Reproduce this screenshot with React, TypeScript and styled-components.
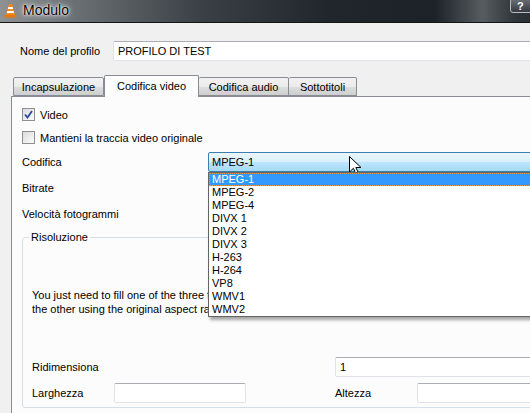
import React from "react";
import styled, { createGlobalStyle } from "styled-components";

const GlobalStyle = createGlobalStyle`
  html, body { margin: 0; padding: 0; background: #f0f0f0; }
  body {
    font-family: "Liberation Sans", Arial, sans-serif;
    font-size: 11px;
    color: #000;
  }
  #root { width: 530px; height: 413px; overflow: hidden; }
`;

const Window = styled.div`
  width: 530px;
  height: 413px;
  overflow: hidden;
  display: flex;
  flex-direction: column;
  background: #f0f0f0;
`;

const TitleBar = styled.div`
  height: 22px;
  flex: none;
  display: flex;
  align-items: flex-start;
  padding-left: 4px;
  background: linear-gradient(
    90deg,
    #8e9295 0%,
    #6b7074 14%,
    #3a4045 38%,
    #20262b 62%,
    #1c2227 82%,
    #565c60 91%,
    #30363a 97%,
    #2a3034 100%
  );
  border-bottom: 1px solid #151515;
`;

const Cone = styled.svg`
  margin-top: 3px;
  flex: none;
`;

const Title = styled.span`
  margin: 2px 0 0 6px;
  font-family: "Liberation Sans", Arial, sans-serif;
  font-size: 14px;
  line-height: 17px;
  color: #000;
  text-shadow: 0 0 6px #fff, 0 0 3px #fff, 0 0 1px #fff;
`;

const HelpButton = styled.div`
  margin-left: auto;
  margin-top: -2px;
  margin-right: -6px;
  width: 26px;
  height: 15px;
  box-sizing: border-box;
  border: 1px solid #b8bcc0;
  border-radius: 3px;
  background: linear-gradient(#6a7075, #353b40);
  color: #fff;
  font-weight: bold;
  font-size: 11px;
  line-height: 14px;
  padding-left: 6px;
`;

const ProfileRow = styled.div`
  display: flex;
  align-items: center;
  margin-top: 18px;
  padding-left: 20px;
  height: 20px;
`;

const ProfileLabel = styled.span`
  width: 93px;
  flex: none;
`;

const TextBox = styled.div<{ $width: number }>`
  width: ${(p) => p.$width}px;
  height: 20px;
  flex: none;
  box-sizing: border-box;
  background: #fff;
  border: 1px solid #dfe3e8;
  border-top-color: #abadb3;
  border-radius: 2px;
  padding-left: 4px;
  line-height: 18px;
`;

const TabBar = styled.div`
  display: flex;
  align-items: flex-end;
  margin-top: 14px;
  padding-left: 13px;
  height: 21px;
  position: relative;
  z-index: 1;
`;

const Tab = styled.div<{ $active?: boolean; $width: number }>`
  width: ${(p) => p.$width}px;
  box-sizing: border-box;
  text-align: center;
  border: 1px solid #898c95;
  border-left-width: ${(p) => (p.$active ? 1 : 0)}px;
  border-bottom: ${(p) => (p.$active ? "none" : "1px solid #898c95")};
  border-radius: 2px 2px 0 0;
  height: ${(p) => (p.$active ? 22 : 19)}px;
  margin-bottom: ${(p) => (p.$active ? -1 : 0)}px;
  line-height: ${(p) => (p.$active ? 20 : 19)}px;
  background: ${(p) =>
    p.$active ? "#fcfcfc" : "linear-gradient(#f2f2f2 0%, #ebebeb 50%, #dddddd 51%, #cfcfcf 100%)"};
  &:first-child { border-left-width: 1px; }
`;

const Pane = styled.div`
  flex: 1;
  margin-left: 11px;
  border: 1px solid #898c95;
  border-right: none;
  border-bottom: none;
  background: #fcfcfc;
  padding: 6px 0 0 10px;
  display: flex;
  flex-direction: column;
  min-height: 0;
`;

const CheckRow = styled.div`
  height: 23px;
  display: flex;
  align-items: center;
  gap: 5px;
`;

const Box = styled.span`
  width: 13px;
  height: 13px;
  box-sizing: border-box;
  border: 1px solid #8e8f8f;
  background: linear-gradient(135deg, #dcdcdc, #fbfbfb);
  display: flex;
  align-items: center;
  justify-content: center;
`;

const FormRow = styled.div`
  height: 26px;
  display: grid;
  grid-template-columns: 186px 1fr;
  align-items: center;
`;

const Combo = styled.div`
  position: relative;
  width: 340px;
  height: 20px;
  box-sizing: border-box;
  border: 1px solid #3c7fb1;
  border-radius: 2px;
  background: linear-gradient(#eaf6fd 0%, #d9f0fc 49%, #bee6fd 50%, #a7d9f5 100%);
  padding-left: 3px;
  line-height: 18px;
  z-index: 5;
`;

const Popup = styled.div`
  position: absolute;
  top: 19px;
  left: -1px;
  width: 340px;
  box-sizing: border-box;
  background: #fff;
  border: 1px solid #646464;
  box-shadow: 2px 3px 3px rgba(0, 0, 0, 0.35);
  padding-bottom: 0;
`;

const Item = styled.div<{ $selected?: boolean }>`
  height: 13px;
  line-height: 13px;
  padding-left: 3px;
  box-sizing: border-box;
  color: ${(p) => (p.$selected ? "#fff" : "#000")};
  background: ${(p) => (p.$selected ? "#3399ff" : "transparent")};
  outline: ${(p) => (p.$selected ? "1px dotted #e09a50" : "none")};
  outline-offset: -1px;
`;

const Pointer = styled.svg`
  position: absolute;
  left: 140px;
  top: 3px;
`;

const Group = styled.fieldset`
  margin: 4px 0 0 0;
  width: 530px;
  box-sizing: border-box;
  border: 1px solid #d5dfe5;
  border-radius: 3px;
  padding: 0 0 1px 9px;
`;

const Legend = styled.legend`
  margin-left: -3px;
  padding: 0 2px;
  line-height: 13px;
`;

/* the hint runs on under the open list, so it is clipped where the list begins */
const Hint = styled.div`
  margin-top: 44px;
  width: 176px;
  overflow: hidden;
  line-height: 14px;
  white-space: nowrap;
`;

const SizeGrid = styled.div`
  margin-top: 38px;
  display: grid;
  grid-template-columns: 82px 132px 89px 82px 200px;
  grid-auto-rows: 26px;
  align-items: center;
`;

const SpanLabel = styled.span<{ $span?: number }>`
  grid-column: span ${(p) => p.$span ?? 1};
`;

const WideCell = styled.div`
  grid-column: span 2;
`;

const codecs = ["MPEG-1", "MPEG-2", "MPEG-4", "DIVX 1", "DIVX 2", "DIVX 3", "H-263", "H-264", "VP8", "WMV1", "WMV2"];

const tabs = [
  { label: "Incapsulazione", width: 91 },
  { label: "Codifica video", width: 95, active: true },
  { label: "Codifica audio", width: 90 },
  { label: "Sottotitoli", width: 68 },
];

function Checkbox({ checked }: { checked?: boolean }) {
  return (
    <Box>
      {checked && (
        <svg width="9" height="9" viewBox="0 0 9 9">
          <path d="M1 4.5 L3.5 7.5 L8 1" fill="none" stroke="#2a4a9a" strokeWidth="1.8" />
        </svg>
      )}
    </Box>
  );
}

export default function App() {
  return (
    <Window>
      <GlobalStyle />
      <TitleBar>
        <Cone width="13" height="15" viewBox="0 0 13 15">
          <path d="M5 1 L8 1 L11 12 L2 12 Z" fill="#f08a1c" />
          <path d="M4.3 4 L8.7 4 L9.2 6 L3.8 6 Z" fill="#fff" />
          <path d="M3.4 8 L9.6 8 L10.1 10 L2.9 10 Z" fill="#fff" />
          <path d="M0.5 12 L12.5 12 L12.5 14.5 L0.5 14.5 Z" fill="#e8760a" />
        </Cone>
        <Title>Modulo</Title>
        <HelpButton>?</HelpButton>
      </TitleBar>

      <ProfileRow>
        <ProfileLabel>Nome del profilo</ProfileLabel>
        <TextBox $width={430}>PROFILO DI TEST</TextBox>
      </ProfileRow>

      <TabBar>
        {tabs.map((t) => (
          <Tab key={t.label} $active={t.active} $width={t.width}>
            {t.label}
          </Tab>
        ))}
      </TabBar>

      <Pane>
        <CheckRow>
          <Checkbox checked />
          <span>Video</span>
        </CheckRow>
        <CheckRow>
          <Checkbox />
          <span>Mantieni la traccia video originale</span>
        </CheckRow>
        <FormRow>
          <span>Codifica</span>
          <Combo>
            MPEG-1
            <Pointer width="13" height="20" viewBox="0 0 13 20">
              <path
                d="M0.5 0.5 L0.5 16 L4.4 12.3 L7.2 18.6 L9.6 17.6 L6.9 11.5 L12 11.5 Z"
                fill="#fff"
                stroke="#000"
                strokeWidth="1"
                strokeLinejoin="round"
              />
            </Pointer>
            <Popup>
              {codecs.map((c, i) => (
                <Item key={c} $selected={i === 0}>
                  {c}
                </Item>
              ))}
            </Popup>
          </Combo>
        </FormRow>
        <FormRow>
          <span>Bitrate</span>
        </FormRow>
        <FormRow>
          <span>Velocità fotogrammi</span>
        </FormRow>

        <Group>
          <Legend>Risoluzione</Legend>
          <Hint>
            You just need to fill one of the three following parameters, VLC will autodetect
            <br />
            the other using the original aspect ratio
          </Hint>
          <SizeGrid>
            <SpanLabel $span={3}>Ridimensiona</SpanLabel>
            <WideCell>
              <TextBox $width={200}>1</TextBox>
            </WideCell>
            <SpanLabel>Larghezza</SpanLabel>
            <TextBox $width={132} />
            <span />
            <SpanLabel>Altezza</SpanLabel>
            <TextBox $width={200} />
          </SizeGrid>
        </Group>
      </Pane>
    </Window>
  );
}
